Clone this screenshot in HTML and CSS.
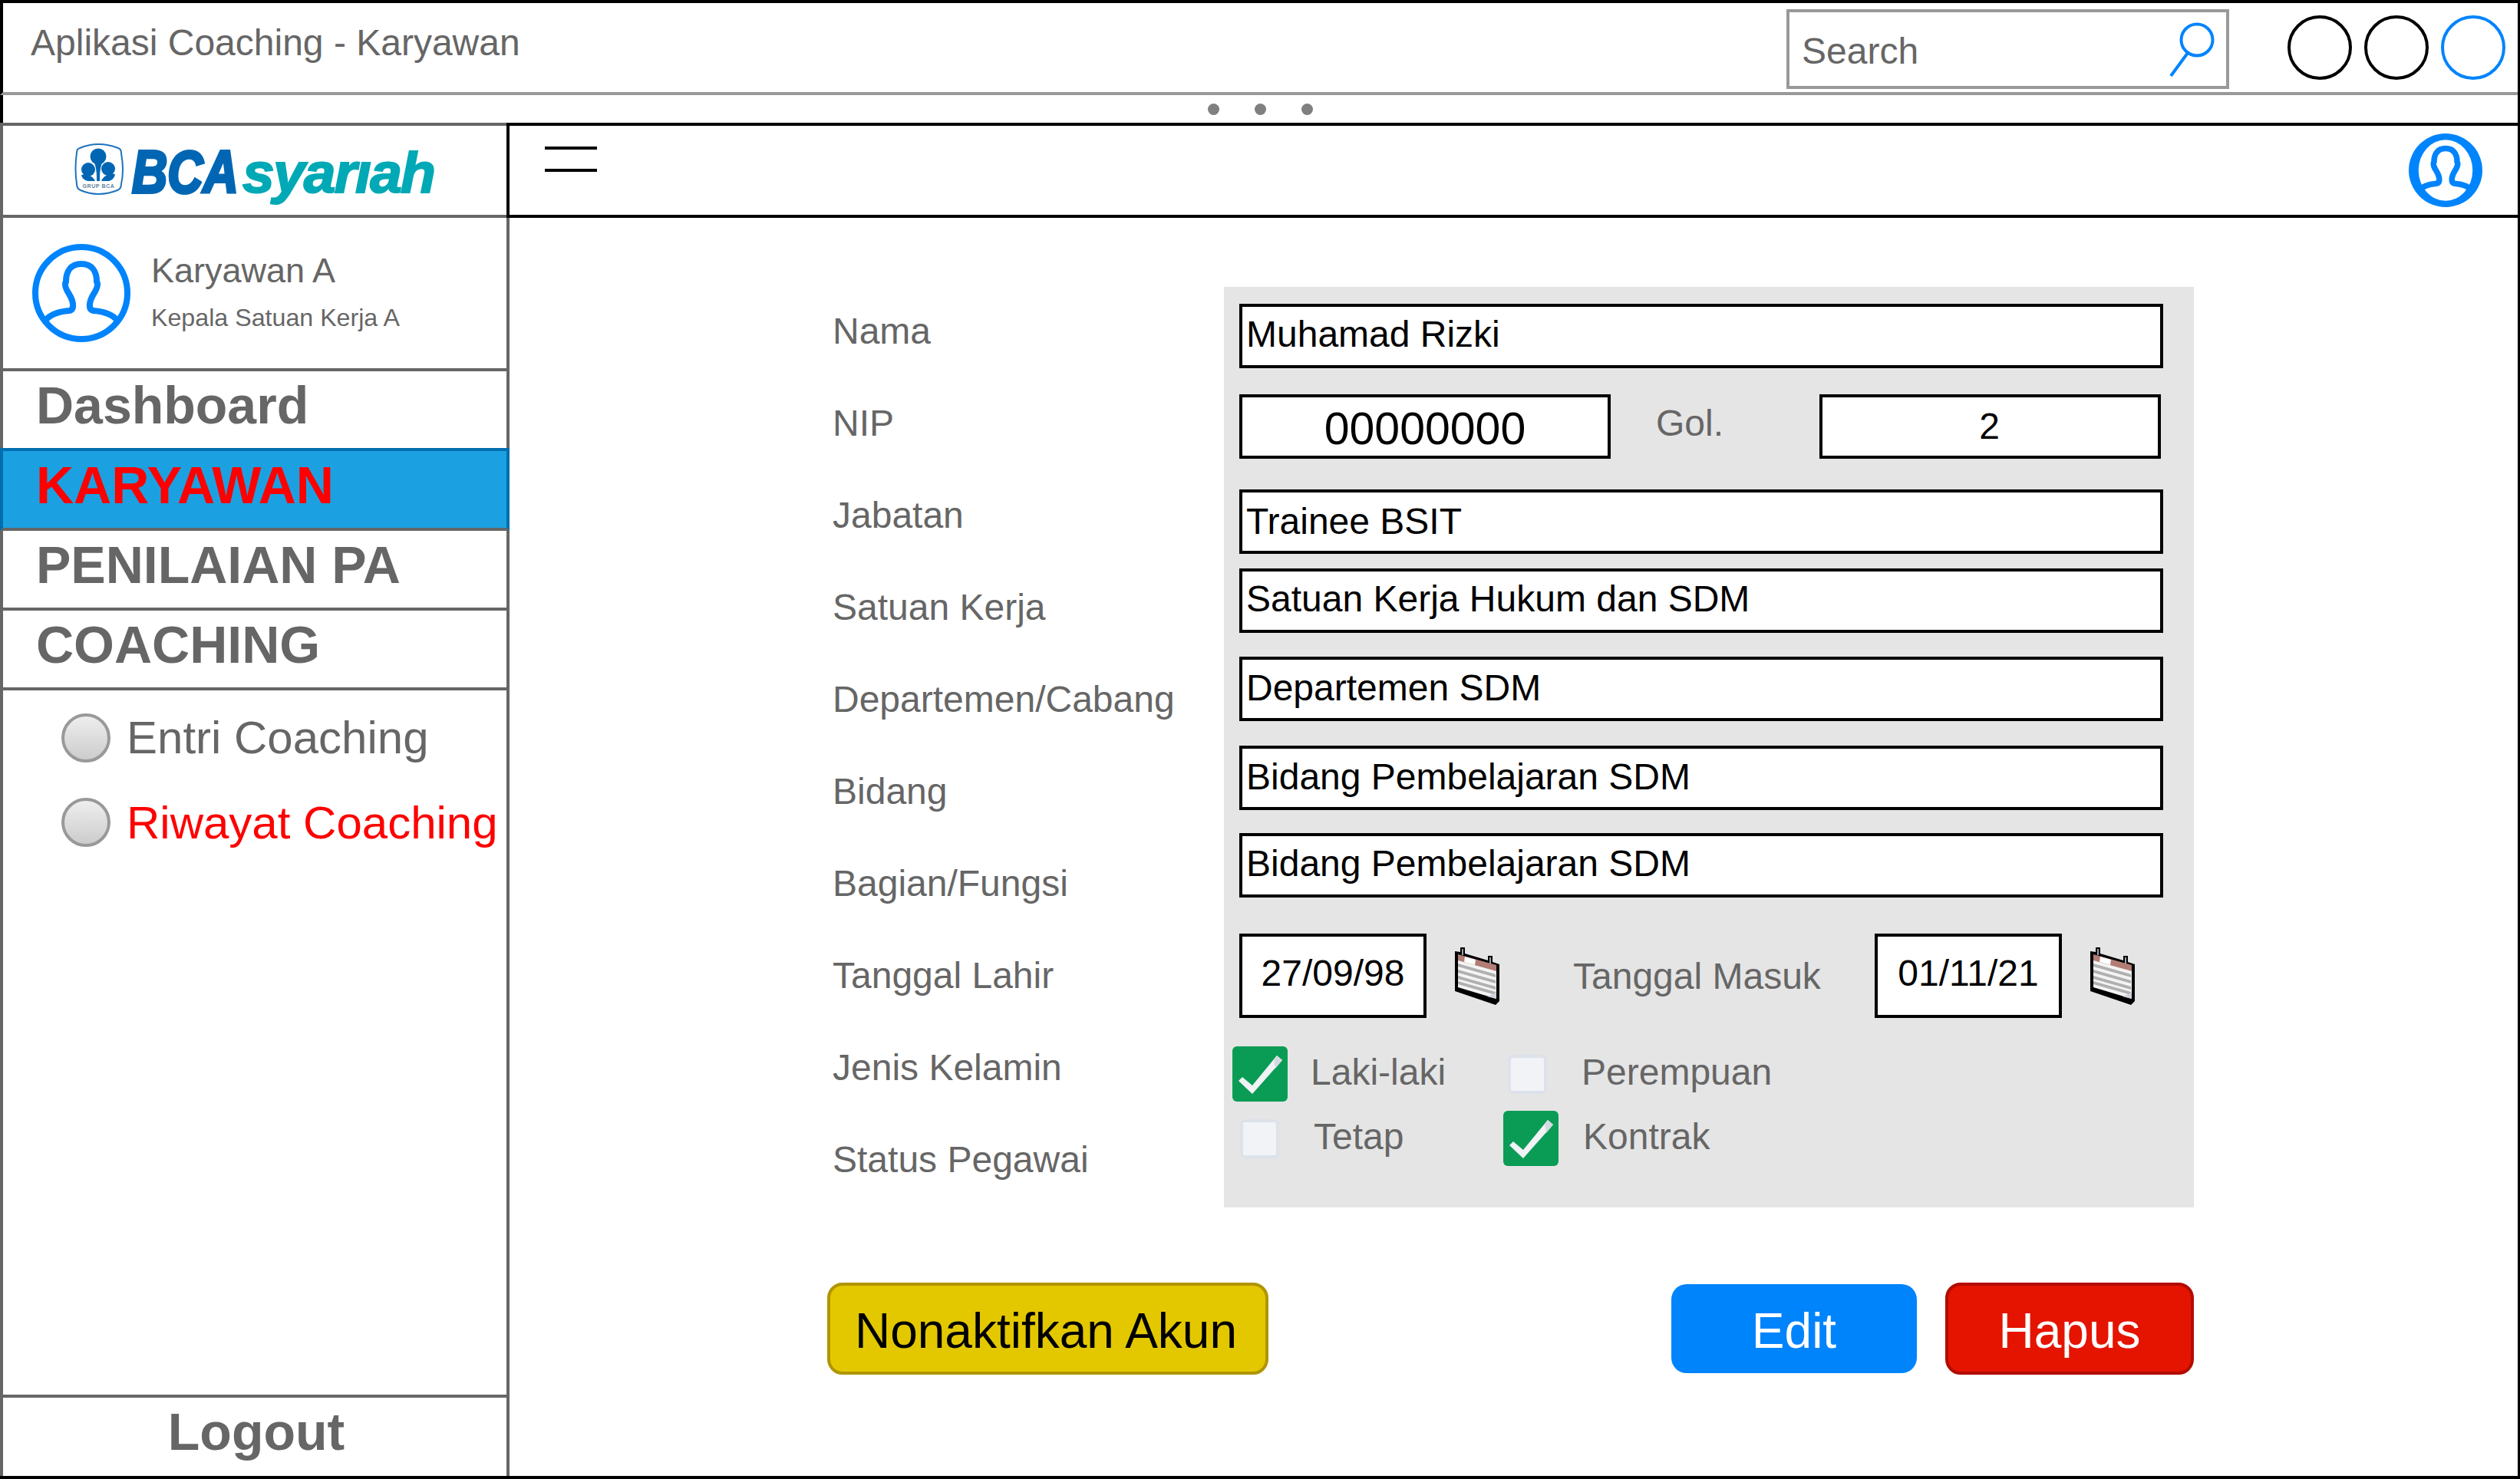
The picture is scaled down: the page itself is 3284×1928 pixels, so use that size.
FILE: index.html
```html
<!DOCTYPE html>
<html lang="id">
<head>
    <meta charset="UTF-8">
    <title>Aplikasi Coaching - Karyawan</title>
    <link rel="stylesheet" href="styles.css">
</head>
<body>

<svg class="defs" width="0" height="0">
    <symbol id="personShape" viewBox="0 0 128 128">
        <path d="M17 100C23 92 36 88 48 87Q54 86 53 78C52 70 48 66 45 60C43 56 42 52 44 49C44 36 50 26 64 26C78 26 84 36 84 49C86 52 85 56 83 60C80 66 76 70 75 78Q74 86 80 87C92 88 105 92 111 100"/>
    </symbol>
    <symbol id="calendar" viewBox="10 7 59 76">
        <path d="M11 13L18 14V8H24V16L54 25V19H60V27L69 30V78L64 83L11 65Z" fill="#000"/>
        <path d="M15 24L65 38V75L15 60Z" fill="#f4f4f4"/>
        <path d="M15 17L65 31V39L15 25Z" fill="#b27d74"/>
        <path d="M24 20L38 24L37 31L23 27Z" fill="#fff"/>
        <path d="M15 29L64 43V47L15 33ZM15 37L64 51V55L15 41ZM15 45L64 59V63L15 49ZM15 52L64 66V70L15 56Z" fill="#b0b0b0"/>
        <path d="M53 72L65 67V75Z" fill="#cfd3dc"/>
        <path d="M20 10H22V18H20ZM56 21H58V29H56Z" fill="#9aa5b5"/>
    </symbol>
    <symbol id="tick" viewBox="0 0 72 72">
        <path d="M8 45L13 40L26 51L58 12L65 18L26 62Z" fill="#f0f2f6"/>
        <path d="M58 12L65 18L56 29L54 17Z" fill="#d5dae2"/>
    </symbol>
</svg>

<div class="window">

    <!-- title bar -->
    <div class="titlebar">
        <div class="app-title">Aplikasi Coaching - Karyawan</div>
        <div class="search">
            <span>Search</span>
            <svg class="search-icon" width="60" height="72" viewBox="0 0 60 72">
                <circle cx="37" cy="24" r="20.5"/>
                <path d="M25 41L3 71"/>
            </svg>
        </div>
        <div class="win-buttons">
            <span class="win-btn"></span>
            <span class="win-btn"></span>
            <span class="win-btn win-btn-blue"></span>
        </div>
    </div>

    <div class="grip">
        <span></span><span></span><span></span>
    </div>

    <div class="app">

        <!-- sidebar -->
        <div class="sidebar">
            <div class="logo">
                <svg class="logo-mark" width="80" height="80" viewBox="0 0 80 80">
                    <path class="shield" d="M14 13Q38 3 64 13Q68 14 68 20Q72 42 68 60Q68 66 63 68Q38 78 15 68Q10 66 10 60Q7 40 10 19Q10 14 14 13Z"/>
                    <circle cx="38" cy="24" r="10.5" fill="#0066b3"/>
                    <circle cx="25" cy="41" r="9" fill="#0066b3"/>
                    <circle cx="51" cy="40" r="9" fill="#0066b3"/>
                    <path d="M33 32C36 40 36 48 36 56H40C40 48 40 40 43 32Z" fill="#0066b3"/>
                    <path d="M16 48C24 47 31 49 34 56H24Q17 54 16 48Z" fill="#0066b3"/>
                    <path d="M60 47C52 46 45 49 42 56H52Q59 54 60 47Z" fill="#0066b3"/>
                    <text class="logo-grup" x="38.5" y="65" text-anchor="middle">GRUP BCA</text>
                </svg>
                <div class="logo-text"><span class="logo-bca">BCA</span><span class="logo-syariah">syarıah</span></div>
            </div>

            <div class="profile">
                <svg class="avatar-big" width="128" height="128" viewBox="0 0 128 128">
                    <circle cx="64" cy="64" r="60"/>
                    <use href="#personShape"/>
                </svg>
                <div class="profile-text">
                    <div class="profile-name">Karyawan A</div>
                    <div class="profile-role">Kepala Satuan Kerja A</div>
                </div>
            </div>

            <div class="nav-item">Dashboard</div>
            <div class="nav-item nav-active">KARYAWAN</div>
            <div class="nav-item">PENILAIAN PA</div>
            <div class="nav-item">COACHING</div>

            <div class="subnav">
                <div class="subnav-item"><span class="radio"></span>Entri Coaching</div>
                <div class="subnav-item subnav-active"><span class="radio"></span>Riwayat Coaching</div>
            </div>

            <div class="logout">Logout</div>
        </div>

        <!-- main -->
        <div class="main">
            <div class="main-header">
                <div class="hamburger"><span></span><span></span></div>
                <svg class="avatar-small" width="96" height="96" viewBox="0 0 128 128">
                    <circle class="ring-outer" cx="64" cy="64" r="64"/>
                    <ellipse class="ring-inner" cx="64" cy="64" rx="47" ry="53"/>
                    <use href="#personShape"/>
                </svg>
            </div>

            <div class="main-body">
                <div class="form-row">
                    <div class="labels">
                        <div>Nama</div>
                        <div>NIP</div>
                        <div>Jabatan</div>
                        <div>Satuan Kerja</div>
                        <div>Departemen/Cabang</div>
                        <div>Bidang</div>
                        <div>Bagian/Fungsi</div>
                        <div>Tanggal Lahir</div>
                        <div>Jenis Kelamin</div>
                        <div>Status Pegawai</div>
                    </div>

                    <div class="panel">
                        <div class="field">Muhamad Rizki</div>
                        <div class="nip-row">
                            <div class="field field-nip">00000000</div>
                            <div class="gol-label">Gol.</div>
                            <div class="field field-gol">2</div>
                        </div>
                        <div class="field field-jabatan">Trainee BSIT</div>
                        <div class="field field-satuan">Satuan Kerja Hukum dan SDM</div>
                        <div class="field field-dept">Departemen SDM</div>
                        <div class="field field-bidang">Bidang Pembelajaran SDM</div>
                        <div class="field field-bagian">Bidang Pembelajaran SDM</div>

                        <div class="date-row">
                            <div class="date-box">27/09/98</div>
                            <svg class="cal-icon"><use href="#calendar"/></svg>
                            <div class="date-label">Tanggal Masuk</div>
                            <div class="date-box">01/11/21</div>
                            <svg class="cal-icon"><use href="#calendar"/></svg>
                        </div>

                        <div class="check-row check-row-gender">
                            <div class="check check-laki">
                                <span class="box-on"><svg width="72" height="72"><use href="#tick"/></svg></span>
                                <span class="check-text">Laki-laki</span>
                            </div>
                            <div class="check">
                                <span class="box-off"></span>
                                <span class="check-text">Perempuan</span>
                            </div>
                        </div>
                        <div class="check-row check-row-status">
                            <div class="check check-tetap">
                                <span class="box-off"></span>
                                <span class="check-text">Tetap</span>
                            </div>
                            <div class="check">
                                <span class="box-on"><svg width="72" height="72"><use href="#tick"/></svg></span>
                                <span class="check-text">Kontrak</span>
                            </div>
                        </div>
                    </div>
                </div>

                <div class="actions">
                    <button class="btn btn-yellow">Nonaktifkan Akun</button>
                    <button class="btn btn-blue">Edit</button>
                    <button class="btn btn-red">Hapus</button>
                </div>
            </div>
        </div>
    </div>
</div>

</body>
</html>
```

FILE: styles.css
```css
* {
    box-sizing: border-box;
}
body {
    margin: 0;
    font-family: "Liberation Sans", Arial, sans-serif;
    color: #666;
    background-color: white;
    overflow: hidden;
}
.defs {
    position: absolute;
}
.window {
    width: 3284px;
    height: 1928px;
    display: flex;
    flex-direction: column;
    border-top: 4px solid #000;
    border-right: 3px solid #000;
    border-bottom: 4px solid #000;
}

/* title bar */
.titlebar {
    height: 120px;
    flex: none;
    display: flex;
    align-items: flex-start;
    border-left: 4px solid #000;
    border-bottom: 4px solid #999;
}
.app-title {
    font-size: 48px;
    line-height: 48px;
    padding: 28px 0 0 36px;
    margin-right: auto;
}
.search {
    width: 577px;
    height: 104px;
    margin-top: 8px;
    padding: 5px 15px 0 16px;
    display: flex;
    align-items: center;
    justify-content: space-between;
    border: 4px solid #999;
    font-size: 48px;
}
.search-icon {
    fill: none;
    stroke: #0084fc;
    stroke-width: 4;
    margin-top: -5px;
}
.win-buttons {
    display: flex;
    gap: 16px;
    margin: 16px 16px 0 76px;
}
.win-btn {
    width: 84px;
    height: 84px;
    border: 4px solid #000;
    border-radius: 50%;
}
.win-btn-blue {
    border-color: #0084fc;
}
.grip {
    height: 36px;
    flex: none;
    display: flex;
    justify-content: center;
    align-items: center;
    gap: 46px;
    border-left: 4px solid #000;
}
.grip span {
    width: 15px;
    height: 15px;
    border-radius: 50%;
    background-color: #808080;
}

.app {
    flex: 1;
    display: flex;
    min-height: 0;
}

/* sidebar */
.sidebar {
    width: 664px;
    flex: none;
    display: flex;
    flex-direction: column;
    border-left: 4px solid #666;
    border-right: 4px solid #666;
}
.logo {
    height: 124px;
    flex: none;
    display: flex;
    align-items: center;
    padding-left: 86px;
    border-top: 4px solid #666;
    border-bottom: 4px solid #666;
}
.logo-mark {
    flex: none;
    margin-top: -4px;
}
.shield {
    fill: white;
    stroke: #1f74bd;
    stroke-width: 2;
}
.logo-grup {
    font-size: 7px;
    font-weight: bold;
    fill: #5f7f9e;
    letter-spacing: 0.6px;
}
.logo-text {
    display: flex;
    align-items: baseline;
    margin: 4px 0 0 2px;
    font-weight: bold;
    font-style: italic;
    white-space: nowrap;
}
.logo-bca {
    font-size: 78px;
    color: #0066b3;
    -webkit-text-stroke: 4px #0066b3;
    transform: scaleX(0.82);
    transform-origin: left;
    margin-right: -25px;
}
.logo-syariah {
    font-size: 75px;
    letter-spacing: -1.8px;
    color: #00a9b5;
    -webkit-text-stroke: 2px #00a9b5;
}
.profile {
    height: 200px;
    flex: none;
    display: flex;
    align-items: center;
    gap: 27px;
    padding: 0 0 0 38px;
    border-bottom: 4px solid #666;
}
.avatar-big,
.avatar-small {
    flex: none;
    fill: none;
    stroke: #0084fc;
    display: block;
}
.avatar-big {
    stroke-width: 8;
}
.avatar-small {
    stroke-width: 10;
    margin: 10px 0 0 0;
}
.ring-outer {
    fill: #0084fc;
    stroke: none;
}
.ring-inner {
    fill: white;
    stroke: none;
}
.profile-text {
    padding-bottom: 2px;
}
.profile-name {
    font-size: 45px;
    line-height: 50px;
    margin-bottom: 16px;
}
.profile-role {
    font-size: 32.2px;
    line-height: 40px;
}
.nav-item {
    height: 104px;
    flex: none;
    padding-left: 43px;
    font-size: 68px;
    line-height: 88px;
    font-weight: bold;
    border-bottom: 4px solid #666;
}
.nav-active {
    height: 108px;
    margin: -4px -4px 0 -4px;
    color: #ff0000;
    background-color: #1ba1e2;
    border-top: 4px solid #006eaf;
    border-left: 4px solid #006eaf;
    border-right: 4px solid #006eaf;
}
.subnav {
    padding: 30px 0 0 76px;
    display: flex;
    flex-direction: column;
    gap: 46px;
}
.subnav-item {
    height: 64px;
    display: flex;
    align-items: center;
    gap: 21px;
    font-size: 60px;
    white-space: nowrap;
}
.subnav-item:first-child {
    padding-bottom: 2px;
}
.subnav-active {
    color: #ff0000;
}
.radio {
    width: 64px;
    height: 64px;
    flex: none;
    border: 4px solid #999;
    border-radius: 50%;
    background: linear-gradient(#eeeeee, #cccccc);
}
.subnav-item:first-child .radio {
    margin-bottom: -2px;
}
.logout {
    height: 106px;
    margin-top: auto;
    padding-left: 4px;
    text-align: center;
    font-size: 68px;
    line-height: 88px;
    font-weight: bold;
    border-top: 4px solid #666;
}

/* main */
.main {
    flex: 1;
    min-width: 0;
}
.main-header {
    height: 124px;
    margin-left: -4px;
    padding: 0 46px;
    display: flex;
    justify-content: space-between;
    align-items: flex-start;
    border-top: 4px solid #000;
    border-bottom: 4px solid #000;
    border-left: 4px solid #000;
}
.hamburger {
    width: 68px;
    margin-top: 27px;
    display: flex;
    flex-direction: column;
    gap: 25px;
}
.hamburger span {
    height: 4px;
    background-color: #000;
}
.main-body {
    padding: 88px 422px 0 421px;
}
.form-row {
    display: flex;
    align-items: flex-start;
}
.labels {
    width: 510px;
    flex: none;
    font-size: 48px;
    line-height: 120px;
}
.panel {
    flex: 1;
    height: 1200px;
    margin-top: 2px;
    padding: 22px 0 0 20px;
    background-color: #e5e5e5;
}
.field {
    width: 1204px;
    height: 84px;
    padding: 0 0 5px 5px;
    display: flex;
    align-items: center;
    font-size: 48px;
    color: #000;
    background-color: white;
    border: 4px solid #000;
}
.nip-row {
    display: flex;
    align-items: center;
    margin-top: 34px;
}
.field-nip {
    width: 484px;
    padding: 6px 0 0 0;
    justify-content: center;
    font-size: 59px;
}
.gol-label {
    width: 272px;
    padding: 0 0 10px 59px;
    font-size: 48px;
}
.field-gol {
    width: 445px;
    padding: 0 2px 2px 0;
    justify-content: center;
}
.field-jabatan {
    margin-top: 40px;
    padding-bottom: 2px;
}
.field-satuan {
    margin-top: 19px;
}
.field-dept {
    margin-top: 31px;
    padding-bottom: 4px;
}
.field-bidang {
    margin-top: 32px;
    padding-bottom: 4px;
}
.field-bagian {
    margin-top: 30px;
    padding-bottom: 6px;
}
.date-row {
    display: flex;
    align-items: center;
    margin-top: 47px;
}
.date-box {
    width: 244px;
    height: 110px;
    flex: none;
    padding-bottom: 8px;
    display: flex;
    align-items: center;
    justify-content: center;
    font-size: 48px;
    color: #000;
    background-color: white;
    border: 4px solid #000;
}
.cal-icon {
    width: 59px;
    height: 76px;
    flex: none;
    margin-left: 36px;
}
.date-label {
    width: 393px;
    flex: none;
    margin-left: 96px;
    font-size: 48px;
    white-space: nowrap;
}
.check-row {
    display: flex;
    align-items: center;
}
.check-row-gender {
    margin: 37px 0 0 -9px;
}
.check-row-status {
    margin: 12px 0 0 1px;
}
.check {
    height: 72px;
    display: flex;
    align-items: center;
    gap: 32px;
    font-size: 48px;
}
.check-laki {
    width: 359px;
    gap: 30px;
}
.check-tetap {
    width: 343px;
}
.check-text {
    padding-bottom: 6px;
}
.box-on {
    width: 72px;
    height: 72px;
    flex: none;
    border-radius: 6px;
    background-color: #0a9c55;
}
.box-on svg {
    display: block;
}
.box-off {
    width: 51px;
    height: 51px;
    flex: none;
    margin-right: 13px;
    border: 4px solid #dde2ea;
    border-radius: 6px;
    background-color: #f1f3f7;
}
.actions {
    display: flex;
    align-items: center;
    gap: 37px;
    margin: 98px 0 0 -7px;
}
.btn {
    height: 120px;
    padding: 6px 0 0 0;
    font-family: inherit;
    font-size: 64px;
    border-radius: 20px;
    border: 4px solid;
}
.btn-yellow {
    width: 575px;
    padding-right: 5px;
    margin-right: auto;
    color: #000;
    background-color: #e3c800;
    border-color: #b09500;
}
.btn-blue {
    width: 320px;
    height: 116px;
    color: white;
    background-color: #0084fc;
    border: none;
}
.btn-red {
    width: 324px;
    color: white;
    background-color: #e51400;
    border-color: #b20c00;
}
```
